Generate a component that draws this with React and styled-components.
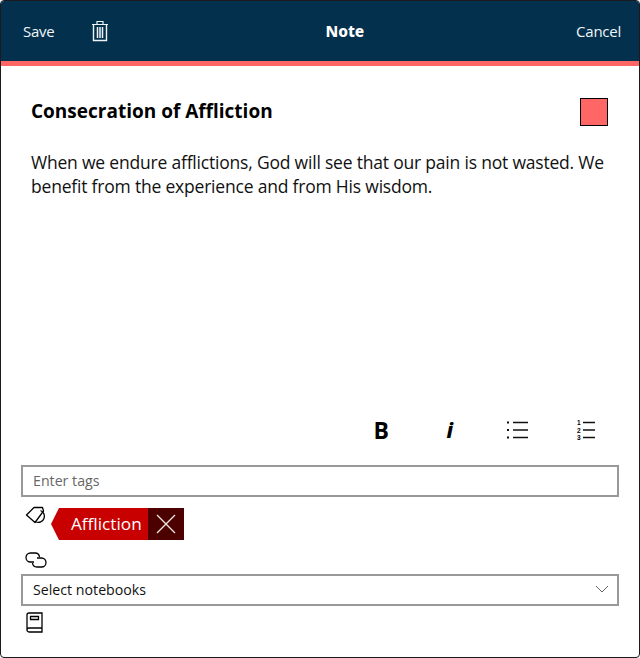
import React from "react";
import styled, { createGlobalStyle } from "styled-components";

const Global = createGlobalStyle`
  html, body { margin: 0; padding: 0; background: #fff; }
  body { font-family: "Open Sans", "Noto Sans", "Liberation Sans", sans-serif; }
`;

const Win = styled.div`
  box-sizing: border-box;
  width: 640px;
  height: 658px;
  border: 1px solid #1a1a1a;
  border-radius: 4px;
  overflow: hidden;
  display: flex;
  flex-direction: column;
  background: #fff;
`;
const Header = styled.header`
  box-sizing: border-box;
  height: 65px;
  flex: none;
  background: #03304d;
  border-bottom: 5px solid #ff6666;
  display: flex;
  justify-content: space-between;
  align-items: center;
  padding: 0 18px 0 22px;
  color: #fff;
`;
const HeaderLeft = styled.div`
  display: flex;
  align-items: center;
  gap: 37px;
`;
const HeaderAction = styled.span`
  font-size: 15px;
  letter-spacing: -0.25px;
  color: #f2f6f8;
`;
const HeaderTitle = styled.span`
  font-family: "Noto Sans", "Open Sans", sans-serif;
  font-size: 15.5px;
  font-weight: 800;
  margin-left: 4px;
`;
const TrashButton = styled.span`
  display: flex;
  width: 18px;
  height: 22px;
`;
const Content = styled.main`
  flex: 1;
  padding: 30px 31px 0 30px;
`;
const TitleRow = styled.div`
  display: flex;
  align-items: center;
  justify-content: space-between;
`;
const NoteTitle = styled.h1`
  margin: 0;
  font-size: 19px;
  font-weight: 700;
  color: #000;
`;
const Swatch = styled.span`
  box-sizing: border-box;
  width: 28px;
  height: 28px;
  margin-top: 2px;
  background: #ff6666;
  border: 1px solid #000;
`;
const NoteBody = styled.p`
  margin: 24px 0 0;
  width: 580px;
  font-size: 17.5px;
  letter-spacing: -0.2px;
  line-height: 24px;
  color: #111;
`;
const Tools = styled.div`
  flex: none;
  height: 38px;
  display: grid;
  grid-template-columns: repeat(4, 68.5px);
  justify-content: end;
  align-items: center;
  justify-items: center;
  padding-right: 18px;
`;
const BoldGlyph = styled.b`
  font-size: 23px;
  line-height: 1;
  color: #000;
`;
const ItalicGlyph = styled.i`
  font-size: 21px;
  font-weight: 800;
  line-height: 1;
  font-family: "Noto Sans", sans-serif;
  color: #000;
`;
const Footer = styled.footer`
  flex: none;
  padding: 16px 20px 0;
  height: 208px;
  box-sizing: border-box;
`;
const Field = styled.div`
  box-sizing: border-box;
  height: 32px;
  border: 2px solid #999;
  display: flex;
  align-items: center;
  justify-content: space-between;
  padding: 0 8px 2px 10px;
  font-size: 14.2px;
  color: ${(p) => (p.$placeholder ? "#666" : "#111")};
`;
const TagRow = styled.div`
  display: flex;
  align-items: flex-start;
  margin: 8px 0 0 4px;
  height: 35px;
`;
const IconSlot = styled.span`
  display: flex;
  width: 22px;
  height: 22px;
  margin-top: 1px;
  flex: none;
`;
const Chip = styled.div`
  display: flex;
  height: 32px;
  margin: 3px 0 0 4px;
`;
const ChipLabel = styled.span`
  display: flex;
  align-items: center;
  box-sizing: border-box;
  height: 32px;
  width: 97px;
  padding: 0 0 2px 20px;
  background: #c80000;
  clip-path: polygon(0 50%, 8px 0, 100% 0, 100% 100%, 8px 100%);
  color: #fff;
  font-size: 17.2px;
`;
const ChipClose = styled.span`
  display: flex;
  align-items: center;
  justify-content: center;
  width: 36px;
  height: 32px;
  background: #4d0000;
`;
const LinkRow = styled.div`
  height: 23px;
  margin: 11px 0 0 4px;
`;
const BookRow = styled.div`
  margin: 6px 0 0 5px;
`;

export default function App() {
  return (
    <>
      <Global />
      <Win>
        <Header>
          <HeaderLeft>
            <HeaderAction>Save</HeaderAction>
            <TrashButton>
              <svg width="18" height="22" viewBox="0 0 18 22" fill="none" stroke="#eef3f6">
                <path d="M1 4.5h16M6 4.5V1.5h6v3" strokeWidth="1.2" />
                <path d="M2.5 4.5v16h13v-16" strokeWidth="1.4" />
                <path d="M6.5 7v11M9 7v11M11.5 7v11" strokeWidth="1.5" />
              </svg>
            </TrashButton>
          </HeaderLeft>
          <HeaderTitle>Note</HeaderTitle>
          <HeaderAction>Cancel</HeaderAction>
        </Header>
        <Content>
          <TitleRow>
            <NoteTitle>Consecration of Affliction</NoteTitle>
            <Swatch />
          </TitleRow>
          <NoteBody>
            When we endure afflictions, God will see that our pain is not wasted. We benefit from the experience and from His wisdom.
          </NoteBody>
        </Content>
        <Tools>
          <BoldGlyph>B</BoldGlyph>
          <ItalicGlyph>i</ItalicGlyph>
          <svg width="22" height="20" viewBox="0 0 22 20" stroke="#111" strokeWidth="1.3">
            <path d="M6 2.5h15M6 10h15M6 17.5h15" />
            <path d="M0 2.5h2M0 10h2M0 17.5h2" strokeWidth="2" />
          </svg>
          <svg width="20" height="20" viewBox="0 0 20 20">
            <path d="M6 2.5h12M6 10h12M6 17.5h12" stroke="#111" strokeWidth="1.3" />
            <text x="0" y="5" fontSize="6.5" fontWeight="700" fontFamily="Liberation Sans">1</text>
            <text x="0" y="12.5" fontSize="6.5" fontWeight="700" fontFamily="Liberation Sans">2</text>
            <text x="0" y="20" fontSize="6.5" fontWeight="700" fontFamily="Liberation Sans">3</text>
          </svg>
        </Tools>
        <Footer>
          <Field $placeholder>Enter tags</Field>
          <TagRow>
            <IconSlot>
              <svg width="22" height="20" viewBox="0 0 22 20" fill="none" stroke="#000" strokeWidth="1.3">
                <path d="M1.5 9 L9 1.5 H17.5 L18.5 5 L10 16.5 Z" strokeLinejoin="round" />
                <path d="M15.5 4.5 A6 6 0 0 1 11 16" />
              </svg>
            </IconSlot>
            <Chip>
              <ChipLabel>Affliction</ChipLabel>
              <ChipClose>
                <svg width="20" height="20" viewBox="0 0 20 20" stroke="#f3e6e6" strokeWidth="1.3">
                  <path d="M1 1l18 18M19 1L1 19" />
                </svg>
              </ChipClose>
            </Chip>
          </TagRow>
          <LinkRow>
            <svg width="22" height="16" viewBox="0 0 22 16" fill="none" stroke="#000" strokeWidth="1.3">
              <path d="M9 10H5.5a4.5 4.5 0 0 1 0-9H10a4.5 4.5 0 0 1 4.5 4" />
              <path d="M12 6h4.5a4.5 4.5 0 0 1 0 9H12a4.5 4.5 0 0 1-4.5-4" />
            </svg>
          </LinkRow>
          <Field>
            Select notebooks
            <svg width="14" height="8" viewBox="0 0 14 8" fill="none" stroke="#666" strokeWidth="1">
              <path d="M1 1l6 6 6-6" />
            </svg>
          </Field>
          <BookRow>
            <svg width="17" height="21" viewBox="0 0 17 21" fill="none" stroke="#000" strokeWidth="1.3">
              <path d="M1 18V3a2 2 0 0 1 2-2h13v19H3a2 2 0 0 1-2-2a2 2 0 0 1 2-2h13" />
              <path d="M4.5 4.5h8v3h-8z" />
            </svg>
          </BookRow>
        </Footer>
      </Win>
    </>
  );
}
